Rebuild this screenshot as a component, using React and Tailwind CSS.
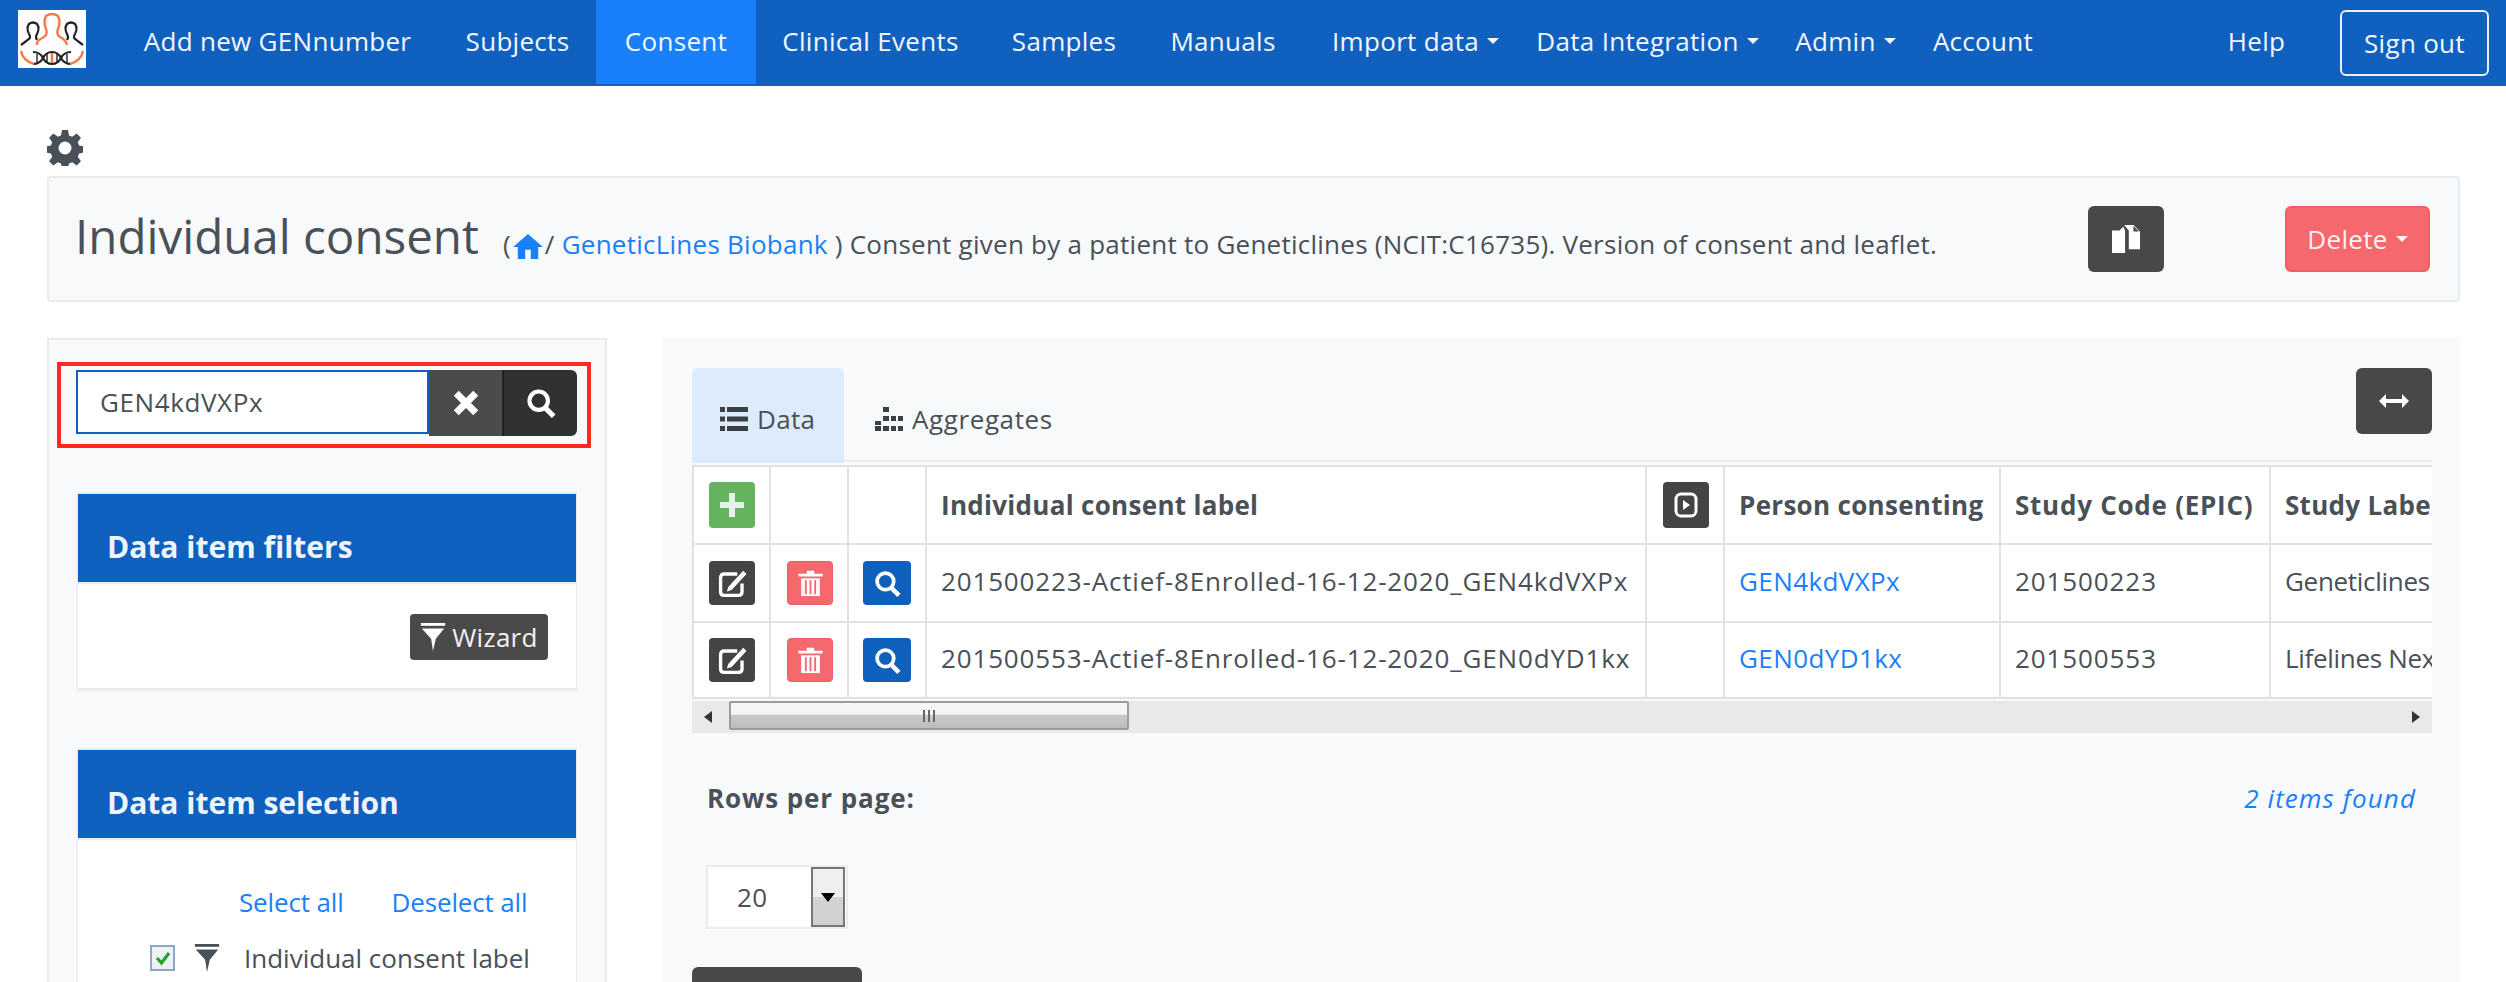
import React from "react";

const Caret = () => (
  <span className="ml-[8px] inline-block h-0 w-0 border-x-[6px] border-t-[6px] border-x-transparent border-t-current align-middle" />
);

const Logo = () => (
  <svg viewBox="0 0 68 58" className="h-[58px] w-[68px] shrink-0 bg-white" fill="none">
    <g stroke="#222" strokeWidth="2.2">
      <path d="M3 35 L11 29 Q13 27 11 24 Q8 18 11 14 Q15 11 19 14 Q22 18 19 24 Q17 27 19 30" />
      <path d="M65 35 L57 29 Q55 27 57 24 Q60 18 57 14 Q53 11 49 14 Q46 18 49 24 Q51 27 49 30" />
      <path d="M15 42 Q22 42 25 48 Q28 54 34 54 Q40 54 43 48 Q46 42 53 42" />
      <path d="M15 54 Q22 54 25 48 Q28 42 34 42 Q40 42 43 48 Q46 54 53 54" />
      <path d="M19 44 V52 M49 44 V52 M29 44 V52 M39 44 V52" strokeWidth="1.400" />
    </g>
    <g stroke="#f5794a" strokeWidth="2.4">
      <path d="M19 35 V33 Q20 30 26 27 Q30 24 28 19 Q25 12 28 6 Q34 2 40 6 Q43 12 40 19 Q38 24 42 27 Q48 30 49 35" />
      <path d="M3 41 Q5 51 16 54 M65 41 Q63 51 52 54 M34 43 V53" />
    </g>
  </svg>
);

const NavItem = ({ w, active, caret, children }) => (
  <a
    className={
      "flex h-[84px] items-center justify-center self-start pb-[2px] " +
      (caret ? "pl-[20px] " : "") +
      w +
      (active ? " bg-[#1a80fa]" : "")
    }
  >
    {children}
    {caret && <Caret />}
  </a>
);

const Gear = () => (
  <svg viewBox="0 0 36 36" className="h-[36px] w-[36px]" fill="#495057">
    <path
      fillRule="evenodd"
      d="M15 0h6l1 5.4 3.2 1.3 4.500-3.100 4.200 4.200-3.100 4.500 1.300 3.200 5.400 1v6l-5.400 1-1.300 3.200 3.100 4.500-4.200 4.200-4.500-3.100-3.200 1.300-1 5.400h-6l-1-5.400-3.200-1.300-4.500 3.100-4.200-4.200 3.100-4.500-1.300-3.200-5.400-1v-6l5.400-1 1.300-3.200-3.100-4.500 4.200-4.200 4.500 3.100 3.200-1.300zM18 11.500a6.500 6.500 0 1 0 0 13a6.500 6.500 0 0 0 0-13z"
    />
  </svg>
);

const Home = () => (
  <svg viewBox="0 0 32 28" className="mx-[2px] inline-block h-[26px] w-[30px] align-[-5px]" fill="#1a80fa">
    <path d="M16 1 L32 15 H27 V28 H19 V18 H13 V28 H5 V15 H0 Z" />
  </svg>
);

const Search = ({ s = 26 }) => (
  <svg viewBox="0 0 26 26" width={s} height={s} fill="none" stroke="#fff">
    <circle cx="11" cy="11" r="8" strokeWidth="3.6" />
    <path d="M16.500 17 L24 24.500" strokeWidth="4.400" />
  </svg>
);

const Funnel = ({ c = "#fff", cls = "" }) => (
  <svg viewBox="0 0 26 30" className={"h-[28px] w-[26px] " + cls} fill={c}>
    <rect x="0" y="0" width="26" height="3" />
    <path d="M1 6 H25 L16 17 L13 30 L11 17 Z" />
  </svg>
);

const Copy = () => (
  <svg viewBox="0 0 32 30" className="h-[28px] w-[30px]" fill="#fff">
    <path d="M1 6 H9 L13 2 L15 6 L15 30 H1 Z" />
    <path d="M14 0 H24 L31 7 V26 H19 V6 Z" />
    <path d="M24 1 V7 H30" fill="#484848" />
  </svg>
);

const Edit = () => (
  <svg viewBox="0 0 26 26" className="h-[31px] w-[31px]" fill="none" stroke="#fff">
    <path d="M17 5 H6 Q3 5 3 8 V20 Q3 23 6 23 H18 Q21 23 21 20 V13" strokeWidth="2.800" />
    <path d="M10 16 L22 3 L24 5 L12 18 L9 19 Z" fill="#fff" strokeWidth="1" />
  </svg>
);

const Trash = () => (
  <svg viewBox="0 0 26 30" className="h-[28px] w-[25px]" fill="#fff">
    <path d="M0 5 H9 V2 H17 V5 H26 V8 H0 Z" />
    <path d="M3 10 H23 V29 H3 Z" />
    <g fill="#f4686e">
      <rect x="7" y="12" width="2" height="15" />
      <rect x="12" y="12" width="2" height="15" />
      <rect x="17" y="12" width="2" height="15" />
    </g>
  </svg>
);

const SmallBtn = ({ cls, children }) => (
  <button className={"flex items-center justify-center rounded-[4px] " + cls}>{children}</button>
);

const DARK = "h-[44px] w-[46px] bg-[#444444]";
const RED = "h-[44px] w-[46px] bg-[#f4686e] border border-[#ee5f65]";
const BLUE = "h-[44px] w-[48px] bg-[#0f5fbd]";

const Th = ({ children, cls = "" }) => (
  <th className={"border-2 border-t-0 border-[#dee2e6] px-[14px] text-left align-middle font-bold whitespace-nowrap " + cls}>
    {children}
  </th>
);
const Td = ({ children, cls = "" }) => (
  <td className={"border-2 border-[#dee2e6] px-[14px] pb-[3px] align-middle whitespace-nowrap " + cls}>{children}</td>
);

const Row = ({ label, gen, code, study, h }) => (
  <tr className={h}>
    <Td cls="!pl-[15px] !pr-0 !pb-0"><SmallBtn cls={DARK}><Edit /></SmallBtn></Td>
    <Td cls="!pl-[16px] !pr-0 !pb-0"><SmallBtn cls={RED}><Trash /></SmallBtn></Td>
    <Td cls="!pl-[14px] !pr-0 !pb-0"><SmallBtn cls={BLUE}><Search s={27} /></SmallBtn></Td>
    <Td cls="tracking-[0.85px]">{label}</Td>
    <Td />
    <Td cls="tracking-[0.4px]"><a className="text-[#1a80fa]">{gen}</a></Td>
    <Td cls="tracking-[0.9px]">{code}</Td>
    <Td cls="tracking-[-0.3px]">{study}</Td>
  </tr>
);

const Card = ({ title, cls = "", children }) => (
  <div className={"ml-[28px] w-[500px] border-x border-y-2 border-[#e9ecef] bg-white shadow-[0_2px_2px_rgba(0,0,0,0.05)] " + cls}>
    <div className="flex h-[90px] items-center border-b-2 border-[#e9ecef] bg-[#1060c0] pt-[16px] pl-[29px] text-[30px] font-bold tracking-normal text-[#eef4fb]">
      {title}
    </div>
    {children}
  </div>
);

export default function App() {
  return (
    <div className="h-[982px] overflow-hidden bg-white font-['Open_Sans',sans-serif] text-[26px] tracking-[0.3px] text-[#495057]">
      <nav className="flex h-[86px] items-center bg-[#1060c0] pl-[18px] text-[#f3f7fc]">
        <div className="mr-[30px] self-start pt-[10px]"><Logo /></div>
        <NavItem w="w-[323px]">Add new GENnumber</NavItem>
        <NavItem w="w-[157px]">Subjects</NavItem>
        <NavItem w="w-[160px]" active>Consent</NavItem>
        <NavItem w="w-[229px]">Clinical Events</NavItem>
        <NavItem w="w-[158px]">Samples</NavItem>
        <NavItem w="w-[160px]">Manuals</NavItem>
        <NavItem w="w-[205px]" caret>Import data</NavItem>
        <NavItem w="w-[259px]" caret>Data Integration</NavItem>
        <NavItem w="w-[137px]" caret>Admin</NavItem>
        <NavItem w="w-[158px]">Account</NavItem>
        <NavItem w="w-[115px] ml-[137px]">Help</NavItem>
        <button className="ml-[26px] h-[66px] w-[149px] rounded-[6px] border-2 border-[#e8eff8]">Sign out</button>
      </nav>

      <main className="px-[46px] pl-[47px]">
        <div className="mt-[44px] mb-[10px]"><Gear /></div>

        <header className="flex h-[126px] items-start rounded-[4px] border-2 border-[#e9ecef] bg-[#f8f9fa] pr-[28px] pl-[26px]">
          <div className="mt-[26px] flex flex-1 items-baseline">
            <h1 className="text-[47.500px] leading-[64px] font-normal tracking-normal">Individual consent</h1>
            <p className="ml-[24px] whitespace-nowrap tracking-[0.25px]">
              (<Home />/ <a className="text-[#1a80fa]">GeneticLines Biobank</a> ) Consent given by a patient to Geneticlines (NCIT:C16735). Version of consent and leaflet.
            </p>
          </div>
          <button className="mt-[28px] mr-[121px] flex h-[66px] w-[76px] items-center justify-center rounded-[6px] bg-[#484848]"><Copy /></button>
          <button className="mt-[28px] flex h-[66px] w-[145px] items-center justify-center rounded-[6px] border-2 border-[#ee5f65] bg-[#f4686e] text-[#fdf2f2]">Delete<Caret /></button>
        </header>

        <div className="mt-[36px] flex gap-[55px]">
          <aside className="h-[700px] w-[560px] shrink-0 border-2 border-[#e9ecef] bg-[#f8f9fa] pt-[22px]">
            <div className="ml-[8px] h-[86px] w-[534px] border-4 border-[#ff2a1f] pt-[4px] pl-[15px]">
              <div className="flex h-[66px]">
                <div className="flex h-[64px] w-[353px] items-center border-2 border-[#1060c0] bg-white pl-[22px] tracking-[0.6px]">GEN4kdVXPx</div>
                <button className="flex w-[73px] items-center justify-center bg-[#4b4b4b]">
                  <svg viewBox="0 0 24 24" className="h-[26px] w-[26px]" fill="none" stroke="#fff" strokeWidth="6.500"><path d="M3 3 L21 21 M21 3 L3 21" /></svg>
                </button>
                <button className="flex w-[75px] items-center justify-center rounded-r-[6px] border-l-2 border-[#222] bg-[#313131]"><Search s={30} /></button>
              </div>
            </div>

            <Card title="Data item filters" cls="mt-[44px] h-[198px]">
              <div className="flex justify-end pt-[30px] pr-[28px]">
                <button className="flex h-[46px] w-[138px] items-center justify-center gap-[6px] rounded-[4px] bg-[#4a4a4a] text-[#f3f3f3]"><Funnel />Wizard</button>
              </div>
            </Card>

            <Card title="Data item selection" cls="mt-[58px] h-[400px]">
              <div className="mt-[44px] flex h-[36px] items-center gap-[48px] pl-[161px] tracking-[-0.15px] text-[#1a80fa]">
                <a>Select all</a>
                <a>Deselect all</a>
              </div>
              <div className="mt-[20px] flex h-[36px] items-center pl-[72px]">
                <span className="flex h-[26px] w-[25px] items-center justify-center border-2 border-[#8fa6c4] bg-[#eef1f4]">
                  <svg viewBox="0 0 16 16" className="h-[16px] w-[16px]" fill="none" stroke="#1fa32a" strokeWidth="3.200"><path d="M2 8 L6.500 13 L14 3" /></svg>
                </span>
                <Funnel c="#495057" cls="ml-[19px]" />
                <span className="ml-[24px] whitespace-nowrap tracking-[0px]">Individual consent label</span>
              </div>
            </Card>
          </aside>

          <section className="h-[700px] w-[1798px] shrink-0 bg-[#f8f9fa] pt-[30px] pr-[28px] pl-[30px]">
            <div className="flex h-[94px] items-start justify-between border-b-2 border-[#e9ecef]">
              <div className="flex">
                <a className="flex h-[95px] w-[152px] items-center gap-[9px] rounded-t-[6px] bg-[#dcecfd] pt-[7px] pl-[28px] font-medium">
                  <svg viewBox="0 0 28 26" className="h-[26px] w-[28px]" fill="#3a4046">
                    <rect x="0" y="1" width="5" height="5" /><rect x="7" y="1" width="21" height="5" />
                    <rect x="0" y="10.500" width="5" height="5" /><rect x="7" y="10.500" width="21" height="5" />
                    <rect x="0" y="20" width="5" height="5" /><rect x="7" y="20" width="21" height="5" />
                  </svg>
                  Data
                </a>
                <a className="flex h-[95px] items-center gap-[9px] pt-[7px] pl-[31px] font-medium tracking-[0.6px]">
                  <svg viewBox="0 0 28 26" className="h-[26px] w-[28px]" fill="#3a4046">
                    <rect x="8" y="1" width="6" height="5" /><rect x="8" y="10" width="6" height="5" /><rect x="8" y="20" width="6" height="5" />
                    <rect x="0" y="15" width="6" height="4" /><rect x="0" y="20" width="6" height="5" />
                    <rect x="16" y="10" width="5" height="5" /><rect x="16" y="20" width="5" height="5" />
                    <rect x="23" y="10" width="5" height="5" /><rect x="23" y="20" width="5" height="5" />
                  </svg>
                  Aggregates
                </a>
              </div>
              <button className="flex h-[66px] w-[76px] items-center justify-center rounded-[6px] bg-[#484848]">
                <svg viewBox="0 0 30 14" className="h-[14px] w-[30px]" fill="#fff"><path d="M0 7 L7 0 V5 H23 V0 L30 7 L23 14 V9 H7 V14 Z" /></svg>
              </button>
            </div>

            <div className="mt-[3px] w-[1740px] overflow-hidden">
              <table className="w-[1880px] table-fixed border-collapse border-t-2 border-[#dee2e6]">
                <colgroup>
                  <col className="w-[77px]" /><col className="w-[78px]" /><col className="w-[78px]" /><col className="w-[720px]" />
                  <col className="w-[78px]" /><col className="w-[276px]" /><col className="w-[270px]" /><col className="w-[303px]" />
                </colgroup>
                <tbody className="bg-white">
                  <tr className="h-[78px]">
                    <Th cls="!pl-[15px] !pr-0">
                      <SmallBtn cls="h-[46px] w-[46px] bg-[#65b25f]">
                        <svg viewBox="0 0 24 24" className="h-[24px] w-[24px]" fill="#e3f3e8"><path d="M9 0 H15 V9 H24 V15 H15 V24 H9 V15 H0 V9 H9 Z" /></svg>
                      </SmallBtn>
                    </Th>
                    <Th /><Th />
                    <Th>Individual consent label</Th>
                    <Th cls="!pl-[16px] !pr-0">
                      <SmallBtn cls="h-[46px] w-[46px] bg-[#444444]">
                        <svg viewBox="0 0 26 26" className="h-[26px] w-[26px]" fill="none" stroke="#fff" strokeWidth="3"><rect x="3" y="2" width="20" height="22" rx="5" /><path d="M10 8 L17 13 L10 18 Z" fill="#fff" strokeWidth="0" /></svg>
                      </SmallBtn>
                    </Th>
                    <Th>Person consenting</Th>
                    <Th cls="tracking-[0.75px]">Study Code (EPIC)</Th>
                    <Th>Study Label</Th>
                  </tr>
                  <Row h="h-[78px]" label="201500223-Actief-8Enrolled-16-12-2020_GEN4kdVXPx" gen="GEN4kdVXPx" code="201500223" study="Geneticlines" />
                  <Row h="h-[76px]" label="201500553-Actief-8Enrolled-16-12-2020_GEN0dYD1kx" gen="GEN0dYD1kx" code="201500553" study="Lifelines Next" />
                </tbody>
              </table>
            </div>

            <div className="mt-[2px] flex h-[32px] w-[1740px] items-center bg-[#e9e9e9]">
              <svg viewBox="0 0 8 12" className="ml-[12px] h-[12px] w-[8px]" fill="#333"><path d="M8 0 V12 L0 6 Z" /></svg>
              <div className="ml-[17px] flex h-[29px] w-[400px] items-center justify-center self-start rounded-[2px] border-2 border-[#9c9c9c] bg-[linear-gradient(#f5f5f5_45%,#c9c9c9_50%,#bdbdbd)]">
                <span className="h-[12px] w-[12px] border-x-2 border-[#666] bg-[linear-gradient(90deg,transparent_40%,#666_40%,#666_60%,transparent_60%)]" />
              </div>
              <svg viewBox="0 0 8 12" className="mr-[12px] ml-auto h-[12px] w-[8px]" fill="#333"><path d="M0 0 V12 L8 6 Z" /></svg>
            </div>

            <div className="mt-[47px] flex h-[36px] w-[1740px] items-center justify-between pr-[16px] pl-[15px]">
              <span className="font-bold tracking-[0.9px]">Rows per page:</span>
              <a className="tracking-[1.1px] text-[#1a80fa] italic">2 items found</a>
            </div>

            <div className="mt-[49px] ml-[14px] flex h-[64px] w-[142px] items-center border-2 border-[#e9ecef] bg-white">
              <span className="ml-[29px] flex-1">20</span>
              <span className="mr-[1px] flex h-[60px] w-[34px] items-center justify-center border-2 border-[#767676] bg-[linear-gradient(#efefef_50%,#d4d4d4_50%,#d0d0d0)]">
                <span className="h-0 w-0 border-x-[7px] border-t-[9px] border-x-transparent border-t-black" />
              </span>
            </div>

            <button className="mt-[38px] h-[66px] w-[170px] rounded-[6px] bg-[#484848]" />
          </section>
        </div>
      </main>
    </div>
  );
}
